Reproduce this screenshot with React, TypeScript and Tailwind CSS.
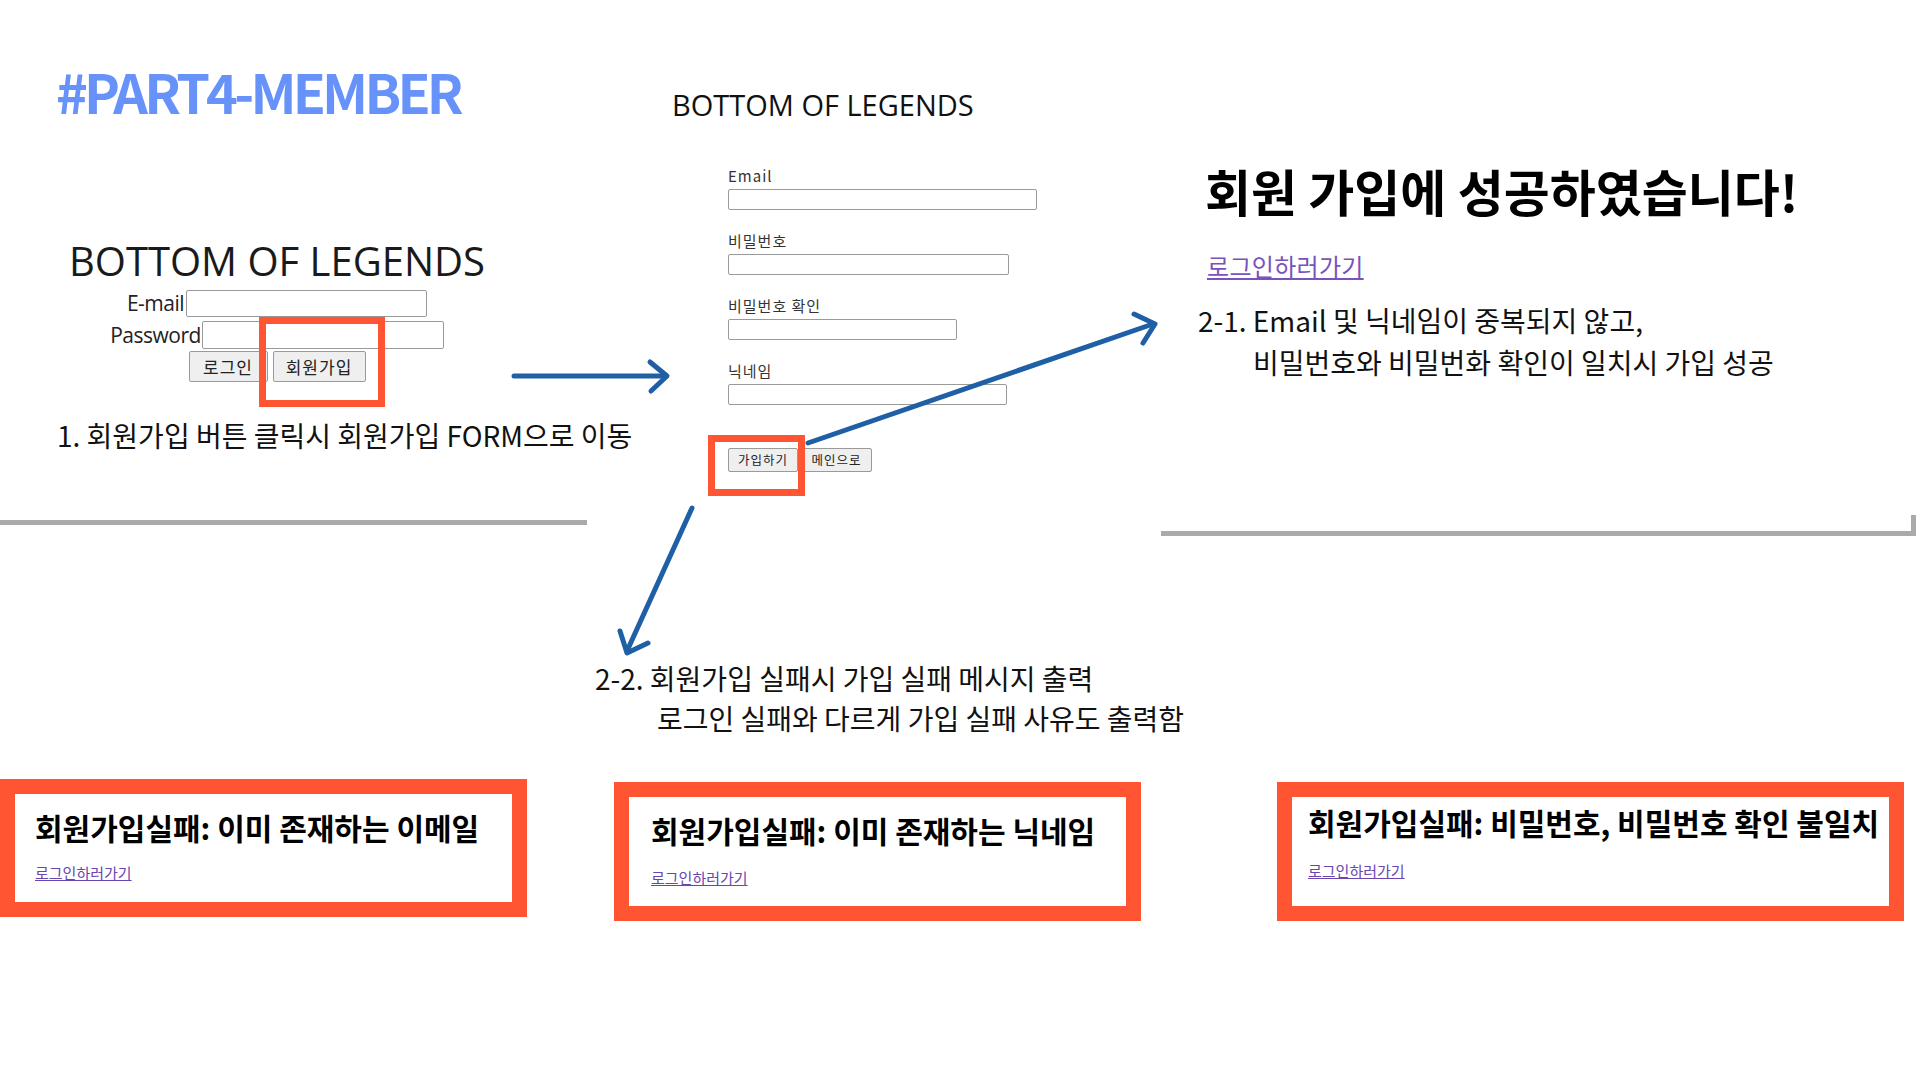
const ARROW = '#1f5fa6';

function Arrows() {
  return (
    <svg className="absolute inset-0 pointer-events-none" width="1920" height="1080" viewBox="0 0 1920 1080" fill="none">
      <g stroke={ARROW} strokeWidth="5" strokeLinecap="round" strokeLinejoin="round">
        <path d="M514 376 L666 376" />
        <path d="M650 362 L667 376 L651 391" />
        <path d="M808 443 L1153 324" />
        <path d="M1134 314 L1155 324 L1143 343" />
        <path d="M692 508 L627 651" />
        <path d="M620 631 L627 653 L648 643" />
      </g>
    </svg>
  );
}

function LoginShot() {
  return (
    <div className="absolute left-[57px] top-[241px] w-[440px] flex flex-col items-center text-[#1a1a1a]">
      <div className="font-['Open_Sans',sans-serif] text-[40px] leading-none h-[40px] whitespace-nowrap">BOTTOM OF LEGENDS</div>
      <div className="mt-[9px] flex items-center font-['Open_Sans',sans-serif] text-[21px] tracking-[-0.5px] text-[#222]">
        <span className="mr-[2px] leading-none">E-mail</span>
        <div className="w-[241px] h-[27px] border border-[#9a9a9a] rounded-[2px] bg-white" />
      </div>
      <div className="mt-[4px] flex items-center font-['Open_Sans',sans-serif] text-[21px] tracking-[-0.5px] text-[#222]">
        <span className="mr-[1px] leading-none">Password</span>
        <div className="w-[242px] h-[28px] border border-[#9a9a9a] rounded-[2px] bg-white" />
      </div>
      <div className="mt-[2px] flex gap-[5px] font-['Noto_Sans_CJK_KR',sans-serif] text-[17px] tracking-[1px] text-[#222]">
        <button className="w-[79px] h-[31px] bg-[#efefef] border border-[#9a9a9a] rounded-[2px] leading-none">로그인</button>
        <button className="w-[93px] h-[31px] bg-[#efefef] border border-[#9a9a9a] rounded-[2px] leading-none">회원가입</button>
      </div>
    </div>
  );
}

const fields = [
  { label: 'Email', width: 'w-[309px]' },
  { label: '비밀번호', width: 'w-[281px]' },
  { label: '비밀번호 확인', width: 'w-[229px]' },
  { label: '닉네임', width: 'w-[279px]' },
];

function SignupShot() {
  return (
    <>
      <div className="absolute left-[672px] top-[90px] font-['Open_Sans',sans-serif] text-[29px] leading-none text-[#111] whitespace-nowrap">
        BOTTOM OF LEGENDS
      </div>
      <div className="absolute left-[728px] top-[163px] flex flex-col font-['Noto_Sans_CJK_KR',sans-serif] text-[#333]">
        {fields.map((f) => (
          <div key={f.label} className="flex flex-col mb-[18px]">
            <span className="text-[15px] leading-[26px] tracking-[1px]">{f.label}</span>
            <div className={`${f.width} h-[21px] border border-[#9a9a9a] rounded-[2px] bg-white`} />
          </div>
        ))}
        <div className="mt-[25px] flex gap-[3px] text-[12.5px] tracking-[1px] text-[#222]">
          <button className="w-[70px] h-[24px] bg-[#efefef] border border-[#9a9a9a] rounded-[2px] leading-none">가입하기</button>
          <button className="w-[71px] h-[24px] bg-[#efefef] border border-[#9a9a9a] rounded-[2px] leading-none">메인으로</button>
        </div>
      </div>
    </>
  );
}

function ErrorBox({ className, pad, gap, text }: { className: string; pad: string; gap: string; text: string }) {
  return (
    <div className={`absolute border-[15px] border-[#ff5533] bg-white ${className}`}>
      <div className={`flex flex-col ${pad}`}>
        <div className="text-[30px] font-bold leading-none text-black whitespace-nowrap">{text}</div>
        <a className={`${gap} text-[15px] leading-none text-[#6a45b0] underline w-fit`}>로그인하러가기</a>
      </div>
    </div>
  );
}

export default function App() {
  return (
    <div className="relative w-[1920px] h-[1080px] bg-white overflow-hidden font-['Noto_Sans_CJK_KR',sans-serif] text-[#111]">
      <h1 className="absolute left-[56px] top-[64px] text-[54px] font-bold leading-none tracking-[-0.07em] text-[#6692f9]">
        #PART4-MEMBER
      </h1>

      <LoginShot />
      <div className="absolute left-[259px] top-[317px] w-[126px] h-[90px] border-[7px] border-[#ff5533]" />

      <p className="absolute left-[57px] top-[421px] text-[28px] leading-none whitespace-nowrap">
        1. 회원가입 버튼 클릭시 회원가입 FORM으로 이동
      </p>
      <div className="absolute left-0 top-[520px] w-[587px] h-[5px] bg-[#aaaaaa]" />

      <SignupShot />
      <div className="absolute left-[708px] top-[435px] w-[97px] h-[61px] border-[7px] border-[#ff5533]" />

      <div className="absolute left-[1205px] top-[165px] flex flex-col">
        <h2 className="text-[50px] font-bold leading-none text-black whitespace-nowrap">회원 가입에 성공하였습니다!</h2>
        <a className="mt-[39px] ml-[2px] text-[24px] leading-none tracking-[0.3px] text-[#7a52bd] underline w-fit">로그인하러가기</a>
      </div>
      <div className="absolute left-[1198px] top-[299px] text-[28px] leading-[42px] whitespace-nowrap">
        <p>2-1. Email 및 닉네임이 중복되지 않고,</p>
        <p className="pl-[55px]">비밀번호와 비밀번화 확인이 일치시 가입 성공</p>
      </div>
      <div className="absolute left-[1161px] top-[531px] w-[755px] h-[5px] bg-[#aaaaaa]" />
      <div className="absolute left-[1911px] top-[515px] w-[5px] h-[21px] bg-[#aaaaaa]" />

      <div className="absolute left-[595px] top-[658px] text-[28px] leading-[40px] whitespace-nowrap">
        <p>2-2. 회원가입 실패시 가입 실패 메시지 출력</p>
        <p className="pl-[62px]">로그인 실패와 다르게 가입 실패 사유도 출력함</p>
      </div>

      <Arrows />

      <ErrorBox className="left-0 top-[779px] w-[527px] h-[138px]" pad="pl-[20px] pt-[18px]" gap="mt-[23px]" text="회원가입실패: 이미 존재하는 이메일" />
      <ErrorBox className="left-[614px] top-[782px] w-[527px] h-[139px]" pad="pl-[22px] pt-[18px]" gap="mt-[25px]" text="회원가입실패: 이미 존재하는 닉네임" />
      <ErrorBox className="left-[1277px] top-[782px] w-[627px] h-[139px]" pad="pl-[16px] pt-[10px]" gap="mt-[26px]" text="회원가입실패: 비밀번호, 비밀번호 확인 불일치" />
    </div>
  );
}
